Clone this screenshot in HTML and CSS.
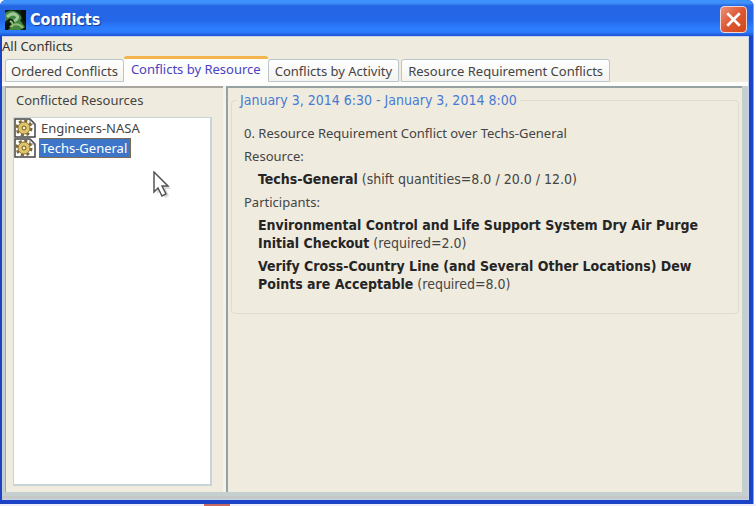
FILE: index.html
```html
<!DOCTYPE html>
<html lang="en">
<head>
  <meta charset="UTF-8">
  <meta name="viewport" content="width=device-width, initial-scale=1.0">
  <title>Conflicts</title>
  <link rel="stylesheet" href="styles.css">
</head>
<body>
  <div class="window">
    <div class="title-bar">
      <svg class="app-icon" width="21" height="20" viewBox="0 0 21 20">
        <rect width="21" height="20" fill="#10220f"/>
        <path d="M0 3Q7-2 13 3T15 10L20 17L15 20H3Q11 14 8 10T0 12Z" fill="#438542"/>
        <path d="M2 7Q7 2 11 5T9 11" fill="none" stroke="#9fc995" stroke-width="3"/>
        <path d="M5 17Q12 11 18 18M5 11Q9 13 7 17" fill="none" stroke="#8fbc75" stroke-width="2"/>
        <path d="M16 0H21V14L17 8Z" fill="#071108"/>
        <path d="M0 14L5 13L3 20H0Z" fill="#071108"/>
      </svg>
      <h1>Conflicts</h1>
      <button class="close" aria-label="Close">
        <svg width="17" height="17" viewBox="0 0 16 16">
          <path d="M3 3L13 13M13 3L3 13" stroke="#fff" stroke-width="2.5" stroke-linecap="square"/>
        </svg>
      </button>
    </div>
    <div class="content">
      <div class="subtitle">All Conflicts</div>
      <div class="tabs" role="tablist">
        <button class="tab" role="tab">Ordered Conflicts</button>
        <button class="tab active" role="tab" aria-selected="true">Conflicts by Resource</button>
        <button class="tab" role="tab">Conflicts by Activity</button>
        <button class="tab" role="tab">Resource Requirement Conflicts</button>
      </div>
      <div class="panes">
        <div class="resources">
          <h2>Conflicted Resources</h2>
          <ul class="resource-list">
            <li>
              <svg width="22" height="20" viewBox="0 0 22 20">
                <path d="M1 1H16L21 6V19H1Z" fill="#fff" stroke="#444" stroke-width="1.5"/>
                <path d="M16 1V6H21" fill="none" stroke="#777"/>
                <circle cx="10" cy="10" r="7" fill="none" stroke="#7d6834" stroke-width="3" stroke-dasharray="3 2.5"/>
                <circle cx="10" cy="10" r="6" fill="#e0c56c" stroke="#8a7338"/>
                <circle cx="10" cy="10" r="2" fill="#fff4c0" stroke="#695524"/>
              </svg>
              <button class="resource">Engineers-NASA</button>
            </li>
            <li>
              <svg width="22" height="20" viewBox="0 0 22 20">
                <path d="M1 1H16L21 6V19H1Z" fill="#fff" stroke="#444" stroke-width="1.5"/>
                <path d="M16 1V6H21" fill="none" stroke="#777"/>
                <circle cx="10" cy="10" r="7" fill="none" stroke="#7d6834" stroke-width="3" stroke-dasharray="3 2.5"/>
                <circle cx="10" cy="10" r="6" fill="#e0c56c" stroke="#8a7338"/>
                <circle cx="10" cy="10" r="2" fill="#fff4c0" stroke="#695524"/>
              </svg>
              <button class="resource selected">Techs-General</button>
            </li>
          </ul>
        </div>
        <div class="details">
          <fieldset class="conflict">
            <legend>January 3, 2014 6:30 - January 3, 2014 8:00</legend>
            <p>0. Resource Requirement Conflict over Techs-General</p>
            <p>Resource:</p>
            <p class="entry"><b>Techs-General</b> (shift quantities=8.0 / 20.0 / 12.0)</p>
            <p>Participants:</p>
            <p class="entry"><b>Environmental Control and Life Support System Dry Air Purge Initial Checkout</b> (required=2.0)</p>
            <p class="entry"><b>Verify Cross-Country Line (and Several Other Locations) Dew Points are Acceptable</b> (required=8.0)</p>
          </fieldset>
        </div>
      </div>
    </div>
  </div>
  <div class="desktop"><span class="desktop-item"></span></div>
  <svg class="cursor" width="19" height="28" viewBox="0 0 19 28">
    <path d="M4 4V23L8 19L12 27L16 25L13 18H18Z" fill="#999" opacity=".35"/>
    <path d="M1 1V21L5 17L9 25L13 23L9 15H15Z" fill="#fff" stroke="#555" stroke-width="1.5"/>
  </svg>
</body>
</html>
```

FILE: styles.css
```css
* {
  box-sizing: border-box;
}
body {
  margin: 0;
  min-height: 100vh;
  display: flex;
  flex-direction: column;
  background: #fff;
  color: #444;
  font-family: "Noto Sans", "DejaVu Sans Condensed", sans-serif;
  font-size: 13px;
  line-height: 18px;
}
button {
  font: inherit;
  color: inherit;
  border: none;
  margin: 0;
}
.window {
  flex: 1;
  display: flex;
  flex-direction: column;
  margin-right: 2px;
  border-radius: 6px 6px 0 0;
  background: #1c43c5;
  border-right: 1px solid #8ba0e8;
}
.title-bar {
  display: flex;
  align-items: center;
  height: 36px;
  padding: 3px 6px 0 5px;
  border-radius: 6px 6px 0 0;
  background: linear-gradient(#3f91fb 0, #3f91fb 3px, #2465e4 6px, #2467e8 20px, #2c7dfe 28px, #2c7dfe 32px, #1b50cd 36px);
}
.title-bar h1 {
  flex: 1;
  margin: 0 0 0 4px;
  color: #fff;
  font-family: "DejaVu Sans Condensed", "DejaVu Sans", sans-serif;
  font-size: 16px;
  line-height: 20px;
  text-shadow: 1px 1px 1px #153c91;
}
.close {
  width: 27px;
  height: 27px;
  padding: 4px;
  border: 1px solid #f4d6d0;
  border-radius: 4px;
  background: linear-gradient(135deg, #ed9079, #dc5634 50%, #d34a15);
}
.close svg {
  display: block;
}
.content {
  flex: 1;
  display: flex;
  flex-direction: column;
  margin: 0 4px 4px 2px;
  border: 1px solid #c4d4f0;
  border-left: none;
  background: #efebde;
}
.subtitle {
  height: 19px;
  color: #333;
}
.tabs {
  display: flex;
  align-items: flex-end;
  height: 30px;
  padding-left: 3px;
  border-bottom: 4px solid #fdfdfb;
}
.tab {
  height: 23px;
  padding: 0 5px;
  border: 1px solid #b9c6ca;
  border-radius: 3px 3px 0 0;
  background: linear-gradient(#fff, #f4f3ef);
  white-space: nowrap;
}
.tab.active {
  height: 26px;
  padding: 0 7px 3px;
  border: none;
  border-top: 3px solid #f3b44b;
  background: #fdfdfb;
  color: #4a43c4;
}
.tab.active ~ .tab {
  padding: 0 6px;
}
.tab + .tab:last-child {
  margin-left: 2px;
}
.panes {
  flex: 1;
  display: flex;
  gap: 3px;
  padding: 0 6px 4px 3px;
  background: #c6cfd0;
  border-bottom: 3px solid #c6c8c5;
}
.resources {
  flex: 0 0 218px;
  display: flex;
  flex-direction: column;
  padding: 3px 11px 6px 7px;
  border-top: 2px solid #a8a69e;
  border-left: 1px solid #a8a69e;
  background: #efebde;
  box-shadow: 3px 0 #f5f3e9;
}
.resources h2 {
  margin: 0 0 8px 3px;
  font-size: 13px;
  font-weight: normal;
}
.resource-list {
  flex: 1;
  margin: 0;
  padding: 0;
  list-style: none;
  background: #fff;
  border: 2px solid #c8d4d8;
  border-width: 1px 2px 2px 1px;
}
.resource-list li {
  display: flex;
  align-items: center;
  gap: 3px;
  height: 20px;
}
.resource {
  height: 20px;
  padding: 0 3px 0 1px;
  border: 1px solid transparent;
  background: none;
}
.resource.selected {
  background: #3d75c8;
  border-color: #7d6d50;
  color: #fff;
}
.details {
  flex: 1;
  min-width: 0;
  padding: 3px 3px 0 3px;
  border-top: 2px solid #96a1a2;
  border-left: 2px solid #96a1a2;
  background: #efebde;
}
.conflict {
  min-width: 0;
  margin: 0;
  padding: 15px 36px 15px 12px;
  border: 1px solid #e0dccc;
  border-radius: 4px;
}
.conflict legend,
.conflict .entry {
  font-family: "DejaVu Sans Condensed", "DejaVu Sans", sans-serif;
  font-size: 14px;
}
.conflict legend {
  margin-left: -7px;
  padding: 0 3px;
  color: #4779d5;
}
.conflict p {
  margin: 0 0 5px;
}
.conflict .entry {
  padding-left: 14px;
}
.conflict b {
  color: #252525;
}
.desktop {
  height: 2px;
  padding-left: 204px;
  background: #eeeefa;
}
.desktop-item {
  display: block;
  width: 26px;
  height: 2px;
  background: #c76863;
}
.cursor {
  position: absolute;
  left: 153px;
  top: 171px;
}
```
